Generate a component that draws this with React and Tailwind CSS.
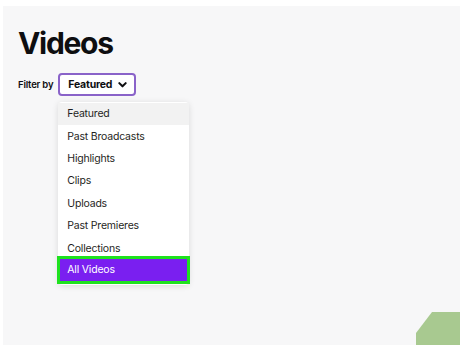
export default function App() {
  const items = [
    "Featured",
    "Past Broadcasts",
    "Highlights",
    "Clips",
    "Uploads",
    "Past Premieres",
    "Collections",
  ];

  return (
    <div className="relative h-[345px] w-[460px] overflow-hidden bg-white font-['Inter',sans-serif]">
      <div className="mt-[6px] ml-[3px] h-[339px] bg-[#f7f7f8] pl-[15px] pt-[19px]">
        {/* Title */}
        <h1 className="text-[30px] font-bold leading-[36px] tracking-[-1.3px] text-[#0e0e10]">Videos</h1>

        {/* Filter */}
        <div className="mt-[12px] flex items-start gap-[5px]">
          <span className="mt-[5px] text-[9.5px] font-semibold tracking-[-0.2px] text-[#0e0e10]">Filter by</span>
          <div className="flex flex-col">
            <button className="flex h-[23px] w-[78px] items-center gap-[5px] rounded-[4px] border-2 border-[#8a63c9] bg-white pl-[8px] text-[10.5px] font-bold tracking-[-0.2px] text-[#0e0e10]">
              Featured
              <svg width="11" height="11" viewBox="0 0 24 24" fill="none" stroke="currentColor" strokeWidth={4.5} strokeLinecap="round" strokeLinejoin="round">
                <path d="M5 9l7 7 7-7" />
              </svg>
            </button>

            {/* Menu */}
            <div className="mt-[6px] w-[131px] rounded-[4px] bg-white pt-[1px] pb-[1px] shadow-[0_1px_6px_rgba(0,0,0,0.12)]">
              {items.map((it, i) => (
                <div
                  key={it}
                  className={`flex h-[22.4px] items-center pl-[9px] text-[10.5px] tracking-[-0.2px] text-[#1f1f23] ${i === 0 ? "bg-[#f2f2f2]" : ""}`}
                >
                  {it}
                </div>
              ))}
              <div className="relative -mx-[1px] -mt-[4px] border-[3px] border-[#1fe21f]">
                <div className="flex h-[22px] items-center bg-[#7a1ff0] pl-[7px] text-[10.5px] tracking-[-0.2px] text-white">All Videos</div>
              </div>
            </div>
          </div>
        </div>
      </div>

      {/* decorative corner */}
      <div className="absolute right-0 bottom-0 h-[33px] w-[44px] bg-[#a8c990] [clip-path:polygon(16px_0,100%_0,100%_100%,0_100%,0_21px)]" />
    </div>
  );
}
